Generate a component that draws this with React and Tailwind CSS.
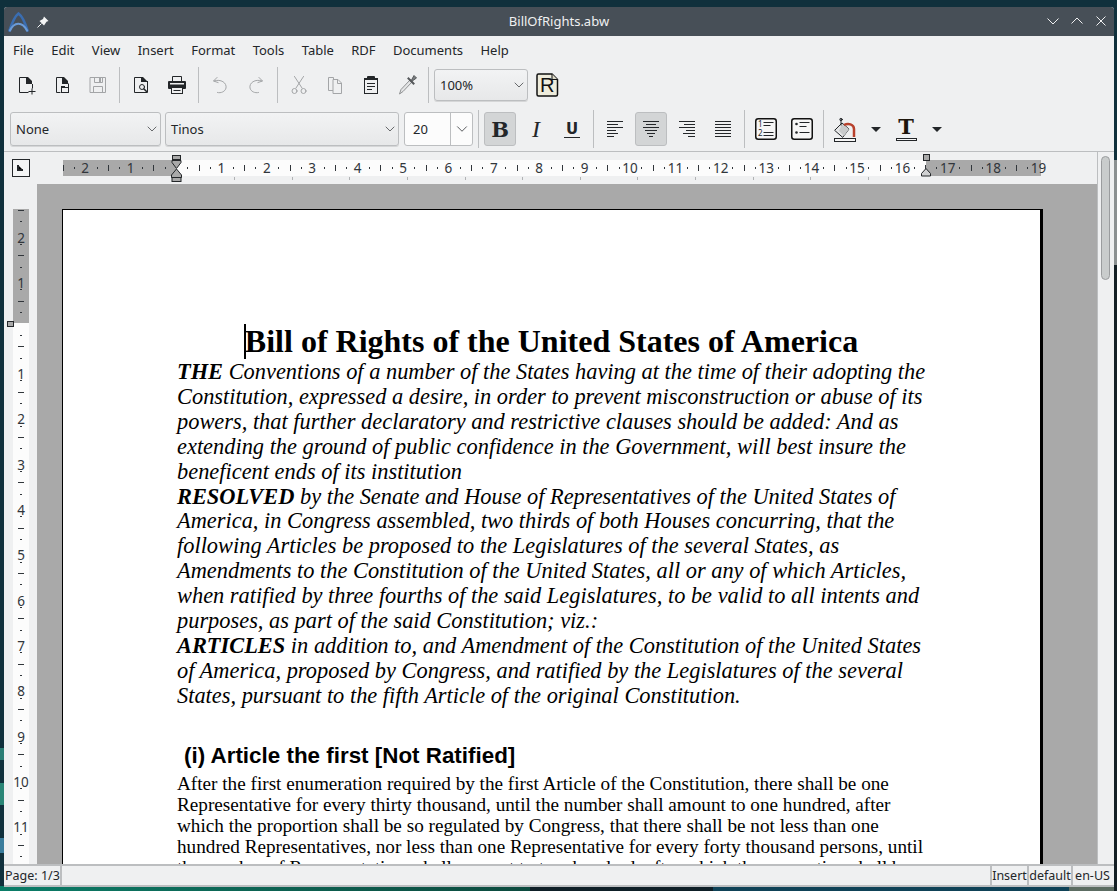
import { ChevronDown } from 'lucide-react'

const menus = ['File', 'Edit', 'View', 'Insert', 'Format', 'Tools', 'Table', 'RDF', 'Documents', 'Help']

const intro = [
  [['THE', true], [' Conventions of a number of the States having at the time of their adopting the']],
  [['Constitution, expressed a desire, in order to prevent misconstruction or abuse of its']],
  [['powers, that further declaratory and restrictive clauses should be added: And as']],
  [['extending the ground of public confidence in the Government, will best insure the']],
  [['beneficent ends of its institution']],
  [['RESOLVED', true], [' by the Senate and House of Representatives of the United States of']],
  [['America, in Congress assembled, two thirds of both Houses concurring, that the']],
  [['following Articles be proposed to the Legislatures of the several States, as']],
  [['Amendments to the Constitution of the United States, all or any of which Articles,']],
  [['when ratified by three fourths of the said Legislatures, to be valid to all intents and']],
  [['purposes, as part of the said Constitution; viz.:']],
  [['ARTICLES', true], [' in addition to, and Amendment of the Constitution of the United States']],
  [['of America, proposed by Congress, and ratified by the Legislatures of the several']],
  [['States, pursuant to the fifth Article of the original Constitution.']],
]

const article = [
  'After the first enumeration required by the first Article of the Constitution, there shall be one',
  'Representative for every thirty thousand, until the number shall amount to one hundred, after',
  'which the proportion shall be so regulated by Congress, that there shall be not less than one',
  'hundred Representatives, nor less than one Representative for every forty thousand persons, until',
  'the number of Representatives shall amount to two hundred; after which the proportion shall be',
]

const DARK = '#232629'
const GREY = '#a3a5a7'

function Sep() {
  return <div className="w-px h-[36px] mx-[3px] bg-[#bcbec0]" />
}

function ToolBtn({ children, active }) {
  return (
    <div className={active
      ? 'w-[32px] h-[34px] mx-[2px] flex items-center justify-center bg-[#d3d5d6] border border-[#bcbec0] rounded-[3px]'
      : 'w-[36px] h-[34px] flex items-center justify-center'}>
      {children}
    </div>
  )
}

function Icon({ children, w = 22, h = 22 }) {
  return <svg width={w} height={h} viewBox={`0 0 ${w} ${h}`} fill="none" strokeLinecap="square">{children}</svg>
}

function Combo({ label, className }) {
  return (
    <div className={`flex items-center justify-between pl-[5px] pr-0 rounded-[3px] border border-[#bcbec0] bg-linear-to-b from-[#f2f3f4] to-[#e7e8e9] shadow-[0_1px_0_#d5d6d7] ${className}`}>
      <span className="pt-[1px]">{label}</span>
      <ChevronDown size={16} strokeWidth={1} color={DARK} />
    </div>
  )
}

function HRuler() {
  const x0 = 176
  const cm = 45.4
  const items = []
  for (let k = -10; k <= 76; k++) {
    const x = x0 + k * (cm / 4)
    if (k % 4 === 0) {
      const n = Math.abs(k / 4)
      if (n !== 0) items.push(<text key={k} x={x} y={173} textAnchor="middle" fontSize="13.5" fill="#31363b">{n}</text>)
    } else if (k % 2 === 0) {
      items.push(<rect key={k} x={Math.round(x)} y={165} width="1" height="6" fill="#31363b" />)
    } else {
      items.push(<rect key={k} x={Math.round(x)} y={167} width="1" height="2" fill="#31363b" />)
    }
  }
  const marks = []
  for (let i = 0; i < 12; i++) {
    marks.push(<rect key={i} x={Math.round(234 + i * 57.64)} y={177} width="1" height="3" fill="#b0b2b4" />)
  }
  return (
    <svg width="1093" height="32" viewBox="4 152 1093 32" className="block shrink-0">
      <rect x="63" y="160" width="113" height="16" fill="#a9a9a9" />
      <rect x="176" y="160" width="750" height="16" fill="#fcfcfc" />
      <rect x="926" y="160" width="115" height="16" fill="#a9a9a9" />
      {items}
      {marks}
      <rect x="12.5" y="159.5" width="17" height="17" fill="#f4f5f5" stroke="#232629" />
      <path d="M18 165v5h5" stroke="#232629" strokeWidth="2" />
      <rect x="172.5" y="155.5" width="8" height="4" fill="#a9a9a9" stroke="#232629" />
      <path d="M172 160.5h9v2l-4.5 6l-4.5-6z" fill="#a9a9a9" stroke="#232629" />
      <path d="M176.5 169l5 6v2.500h-10v-2.500z" fill="#a9a9a9" stroke="#232629" />
      <rect x="172" y="177.500" width="9" height="4" fill="#a9a9a9" stroke="#232629" />
      <rect x="923.500" y="154.500" width="6" height="6" fill="#a9a9a9" stroke="#232629" />
      <path d="M926 168.500l4.500 5v2.500h-9v-2.500z" fill="#cfd0d1" stroke="#232629" />
    </svg>
  )
}

function VRuler() {
  const y0 = 323.5
  const cm = 45.35
  const items = []
  for (let k = -10; k <= 47; k++) {
    const y = y0 + k * (cm / 4)
    if (k % 4 === 0) {
      const n = Math.abs(k / 4)
      if (n !== 0) items.push(<text key={k} x={21} y={y + 10} textAnchor="middle" fontSize="13.5" fill="#31363b">{n}</text>)
    } else if (k % 2 === 0) {
      items.push(<rect key={k} x={18} y={Math.round(y)} width="6" height="1" fill="#31363b" />)
    } else {
      items.push(<rect key={k} x={20} y={Math.round(y)} width="2" height="1" fill="#31363b" />)
    }
  }
  return (
    <svg width="33" height="680" viewBox="4 184 33 680" className="block shrink-0">
      <rect x="13" y="209" width="16" height="114" fill="#a9a9a9" />
      <rect x="13" y="323" width="16" height="541" fill="#fcfcfc" />
      {items}
      <rect x="7.500" y="321.500" width="6" height="5" fill="#a9a9a9" stroke="#232629" />
    </svg>
  )
}

export default function App() {
  return (
    <div className="relative w-[1117px] h-[891px] overflow-hidden bg-[#10303c] pt-[7px] font-['Noto_Sans',sans-serif] text-[13px] text-[#232629]">
      {/* wallpaper showing round the window */}
      <div className="absolute left-0 top-[748px] w-[4px] h-[12px] bg-[#2a7d74]" />
      <div className="absolute left-0 top-[783px] w-[4px] h-[22px] bg-[#2a8576]" />
      <div className="absolute left-0 top-[838px] w-[4px] h-[15px] bg-[#3a7c9c]" />
      <div className="absolute left-0 top-[886px] w-[530px] h-[5px] bg-linear-to-r from-[#0b7d68] to-[#0c4a3e]" />
      <div className="absolute left-[530px] top-[886px] w-[183px] h-[5px] bg-[#0e1f27]" />
      <div className="absolute left-[713px] top-[886px] w-[356px] h-[5px] bg-[#0f4257]" />
      <div className="absolute left-[1069px] top-[886px] w-[48px] h-[5px] bg-[#5c6c62]" />
      <div className="absolute right-0 top-[160px] w-[3px] h-[105px] bg-[#8b9091]" />
      <div className="absolute right-0 top-[265px] w-[3px] h-[630px] bg-[#141f25]" />

      <div className="relative ml-[4px] w-[1110px] h-[880px] flex flex-col bg-[#eff0f1] rounded-t-[3px] overflow-hidden">
        {/* title bar */}
        <div className="relative h-[29px] shrink-0 bg-[#474f57] flex items-center justify-center text-[#eff0f1]">
          <div className="absolute left-[4px] top-[5px] flex items-center gap-[8px]">
            <svg width="21" height="20" viewBox="0 0 21 20" fill="none">
              <path d="M1.500 18.500C4 11 7 4 10.500 1.500C14 4 17.500 12 19.500 18.500" stroke="#3a6db0" strokeWidth="2.600" strokeLinecap="round" />
              <path d="M2 18.500C6 10 14 9 19 18.500" stroke="#6a9bd8" strokeWidth="2.200" strokeLinecap="round" />
            </svg>
            <svg width="12" height="12" viewBox="0 0 12 12">
              <path d="M7 0.500L11.500 5L9.500 5.800L7 9.500L4 6.500L2.500 5L6 3z" fill="#f4f5f5" />
              <path d="M4.500 7.500L0.500 11.500" stroke="#f4f5f5" />
            </svg>
          </div>
          <span>BillOfRights.abw</span>
          <div className="absolute right-[6px] top-[6px] flex items-center gap-[10px]">
            <svg width="14" height="16" viewBox="0 0 14 16" fill="none" stroke="#eff0f1"><path d="M1.500 5.500l5.500 5.500l5.500-5.500" /></svg>
            <svg width="14" height="16" viewBox="0 0 14 16" fill="none" stroke="#eff0f1"><path d="M1.500 10.500l5.500-5.500l5.500 5.500" /></svg>
            <svg width="14" height="16" viewBox="0 0 14 16" fill="none" stroke="#eff0f1"><path d="M2.500 3.500l9 9M11.500 3.500l-9 9" /></svg>
          </div>
        </div>

        {/* menu bar */}
        <div className="h-[28px] shrink-0 flex items-center pl-[9px] pt-[1px]">
          {menus.map((m) => (
            <span key={m} className="mr-[17.400px]">{m}</span>
          ))}
        </div>

        {/* main toolbar */}
        <div className="h-[42px] shrink-0 flex items-center pl-[4px]">
          <ToolBtn>
            <Icon>
              <path d="M11.500 3.500H4.500V18.500H13" stroke={DARK} />
              <path d="M11 3h2l4 4v3h-6z" fill={DARK} />
              <path d="M17.500 10.500V14M14 17.500h6M17 15v5" stroke={DARK} />
            </Icon>
          </ToolBtn>
          <ToolBtn>
            <Icon>
              <path d="M11.500 3.500H5.500V18.500H9" stroke={DARK} />
              <path d="M11 3h2l4 4v3h-6z" fill={DARK} />
              <rect x="10.500" y="13.500" width="7" height="5" stroke={DARK} />
              <rect x="10" y="12" width="4" height="2" fill={DARK} />
              <path d="M17.500 10v3" stroke={DARK} />
            </Icon>
          </ToolBtn>
          <ToolBtn>
            <Icon>
              <path d="M3.500 3.500H18.500V18.500H3.500z" stroke={GREY} />
              <path d="M7.500 3.500V8.500H15.500V3.500M6.500 18.500V12.500H15.500V18.500" stroke={GREY} />
              <rect x="12" y="4" width="2" height="4" fill={GREY} />
            </Icon>
          </ToolBtn>
          <Sep />
          <ToolBtn>
            <Icon>
              <path d="M11.500 3.500H4.500V18.500H17.500V7.500" stroke={DARK} />
              <path d="M11 3h2l4 4v1h-6z" fill={DARK} />
              <circle cx="12" cy="13" r="2.500" stroke={DARK} />
              <path d="M14 15l2.500 2.500" stroke={DARK} strokeWidth="1.500" />
            </Icon>
          </ToolBtn>
          <ToolBtn>
            <Icon>
              <path d="M6.500 7V2.500H15.500V7" stroke={DARK} />
              <rect x="2" y="7" width="18" height="8" rx="1" fill={DARK} />
              <rect x="4" y="9" width="14" height="1.500" fill="#eff0f1" />
              <rect x="5.500" y="13.500" width="11" height="6" fill="#eff0f1" stroke={DARK} />
              <path d="M8 16.500h6" stroke={DARK} />
            </Icon>
          </ToolBtn>
          <Sep />
          <ToolBtn>
            <Icon>
              <path d="M8 3.500L4.500 7L9 8.500" stroke={GREY} />
              <path d="M5 7C12 4.500 18 9 17 14C16.200 17.500 12 19.500 8.500 18.500" stroke={GREY} strokeLinecap="round" />
            </Icon>
          </ToolBtn>
          <ToolBtn>
            <Icon>
              <path d="M14 3.500L17.500 7L13 8.500" stroke={GREY} />
              <path d="M17 7C10 4.500 4 9 5 14C5.800 17.500 10 19.500 13.500 18.500" stroke={GREY} strokeLinecap="round" />
            </Icon>
          </ToolBtn>
          <Sep />
          <div className="flex">
            <ToolBtn>
              <Icon>
                <path d="M6.500 2.500L14 14M15.500 2.500L8 14" stroke={GREY} />
                <circle cx="6.500" cy="17" r="2.500" stroke={GREY} />
                <circle cx="15.500" cy="17" r="2.500" stroke={GREY} />
              </Icon>
            </ToolBtn>
            <ToolBtn>
              <Icon>
                <path d="M9.500 5.500V3.500H4.500V16.500H8.500" stroke={GREY} />
                <path d="M9.500 5.500H14L17.500 9V19.500H9.500z" stroke={GREY} />
                <path d="M13.500 6v3.500H17" stroke={GREY} />
              </Icon>
            </ToolBtn>
            <ToolBtn>
              <Icon>
                <rect x="4.500" y="4.500" width="13" height="15" stroke={DARK} />
                <rect x="7" y="2" width="8" height="4" rx="1" fill={DARK} />
                <rect x="4" y="4" width="14" height="2" fill={DARK} />
                <path d="M7.500 9.500h7M7.500 12.500h7M7.500 15.500h4" stroke={DARK} />
              </Icon>
            </ToolBtn>
            <ToolBtn>
              <Icon>
                <path d="M14 6L5 15.500L3.500 20L7 17.500L16 8z" fill="#e4e5e6" stroke="#8f9193" strokeLinejoin="round" />
                <path d="M12.500 4.500L17.500 9.500" stroke="#55585b" strokeWidth="2" />
                <path d="M15 7L18 1.500L20.500 4L15.500 7.500" fill="#7c7f82" stroke="#55585b" />
              </Icon>
            </ToolBtn>
          </div>
          <Sep />
          <Combo label="100%" className="w-[94px] h-[32px] ml-[2px]" />
          <svg width="23" height="24" viewBox="0 0 23 24" className="ml-[8px]">
            <path d="M2.500 1H16L21.500 6.500V21.500Q21.500 23 20 23H2.500Q1 23 1 21.500V2.500Q1 1 2.500 1z" fill="#eeecdc" stroke="#111" strokeWidth="1.500" />
            <path d="M16 1V6.500H21.500" fill="#dcdac8" stroke="#111" />
            <text x="4" y="19" fontSize="20" fill="#111" className="font-['Liberation_Sans',sans-serif]">R</text>
          </svg>
        </div>

        {/* format toolbar */}
        <div className="h-[45px] shrink-0 flex items-center pl-[6px] gap-[4px] pt-[1px]">
          <Combo label="None" className="w-[151px] h-[34px]" />
          <Combo label="Tinos" className="w-[234px] h-[34px]" />
          <div className="ml-[1px] flex h-[34px] w-[69px] rounded-[3px] border border-[#bcbec0] bg-[#fcfcfc]">
            <span className="w-[45px] pl-[8px] leading-[33px]">20</span>
            <div className="flex-1 border-l border-[#bcbec0] flex items-center justify-center">
              <ChevronDown size={18} strokeWidth={1} color={DARK} />
            </div>
          </div>
          <div className="flex items-center -ml-[3px]">
            <div className="w-px h-[38px] mx-[4px] bg-[#bcbec0]" />
            <div className="w-[32px] h-[34px] ml-[1px] mr-[2px] rounded-[3px] border border-[#bcbec0] bg-[#d3d5d6] flex items-center justify-center font-['DejaVu_Serif',serif] font-bold text-[21px] leading-none">B</div>
            <ToolBtn>
              <span className="font-['Liberation_Serif',serif] italic text-[24px] leading-none">I</span>
            </ToolBtn>
            <ToolBtn>
              <span className="font-['DejaVu_Sans',sans-serif] font-bold text-[15px] leading-[16px] border-b-[1.500px] border-[#232629] px-[2px]">U</span>
            </ToolBtn>
            <div className="w-px h-[38px] mx-[3px] bg-[#bcbec0]" />
            <ToolBtn>
              <Icon>
                <path d="M3.500 3.500h15M3.500 6.500h10M3.500 9.500h15M3.500 12.500h8M3.500 15.500h10M3.500 18.500h6" stroke={DARK} />
              </Icon>
            </ToolBtn>
            <ToolBtn active>
              <Icon>
                <path d="M3.500 3.500h15M6.500 6.500h9M3.500 9.500h15M5.500 12.500h11M7.500 15.500h7M9.500 18.500h3" stroke={DARK} />
              </Icon>
            </ToolBtn>
            <ToolBtn>
              <Icon>
                <path d="M3.500 3.500h15M8.500 6.500h10M3.500 9.500h15M10.500 12.500h8M7.500 15.500h11M12.500 18.500h6" stroke={DARK} />
              </Icon>
            </ToolBtn>
            <ToolBtn>
              <Icon>
                <path d="M3.500 3.500h15M3.500 6.500h15M3.500 9.500h15M3.500 12.500h15M3.500 15.500h15M3.500 18.500h15" stroke={DARK} />
              </Icon>
            </ToolBtn>
            <div className="w-px h-[38px] mx-[3px] bg-[#bcbec0]" />
            <ToolBtn>
              <Icon>
                <rect x="0.750" y="0.750" width="20.500" height="20.500" rx="2.500" fill="#f6f6f6" stroke="#111" strokeWidth="1.500" />
                <text x="3" y="9" fontSize="8" fill="#232629">1</text>
                <text x="3" y="18" fontSize="8" fill="#232629">2</text>
                <path d="M9 4.500h9M9 7.500h6M9 14.500h9M9 17.500h9" stroke="#232629" />
              </Icon>
            </ToolBtn>
            <ToolBtn>
              <Icon>
                <rect x="0.750" y="0.750" width="20.500" height="20.500" rx="2.500" fill="#f6f6f6" stroke="#111" strokeWidth="1.500" />
                <circle cx="5.500" cy="6" r="1.300" fill="#232629" />
                <circle cx="5.500" cy="14.500" r="1.300" fill="#232629" />
                <path d="M9 4.500h9M9 8.500h6M9 14.500h9" stroke="#232629" />
              </Icon>
            </ToolBtn>
            <div className="w-px h-[38px] mx-[3px] bg-[#bcbec0]" />
            <ToolBtn>
              <Icon w={24} h={25}>
                <path d="M2 13L9 6L16 12L10 20z" fill="#e6e7e8" stroke="#232629" />
                <path d="M6 14L9 7L16 12L11 19z" fill="#c9cbcc" />
                <path d="M8 8V2.500" stroke="#232629" />
                <circle cx="8" cy="2.500" r="1.200" stroke="#232629" />
                <path d="M11 8C15 6 21 7 21 12V20" stroke="#b8412c" strokeWidth="2.500" strokeLinecap="butt" />
                <rect x="1.500" y="21.500" width="21" height="3" fill="#f6f6f6" stroke="#232629" />
              </Icon>
            </ToolBtn>
            <div className="w-[27px] flex items-center justify-center -ml-[1px]">
              <div className="w-0 h-0 border-x-[5px] border-x-transparent border-t-[5px] border-t-[#232629]" />
            </div>
            <div className="w-[24px] h-[24px] ml-[5px] flex flex-col items-center">
              <span className="font-['DejaVu_Serif',serif] font-bold text-[21px] leading-[20px] text-[#1d150b]">T</span>
              <div className="w-[21px] h-[3px] mt-[1px] border border-[#232629] bg-[#f6f6f6]" />
            </div>
            <div className="w-[38px] flex items-center justify-center">
              <div className="w-0 h-0 border-x-[5px] border-x-transparent border-t-[5px] border-t-[#232629]" />
            </div>
          </div>
        </div>

        <div className="h-px shrink-0 bg-[#bcbec0]" />

        {/* document area with rulers and scrollbar */}
        <div className="h-[712px] shrink-0 flex">
          <div className="w-[1093px] flex flex-col">
            <HRuler />
            <div className="flex h-[680px]">
              <VRuler />
              <div className="flex-1 bg-[#a9a9a9] pt-[25px] pl-[25px] overflow-hidden">
                <div className="w-[981px] h-[700px] bg-white border-t border-l border-black border-r-[3px] pl-[114px] pt-[113px] text-black font-['Liberation_Serif',serif] whitespace-nowrap">
                  <div className="relative w-[749px] text-center font-bold text-[32px] leading-[37px]">
                    <span className="relative">
                      <span className="absolute -left-[1px] top-[1px] w-[2px] h-[35px] bg-black" />
                      Bill of Rights of the United States of America
                    </span>
                  </div>
                  <div className="text-[22.400px] leading-[24.900px] italic">
                    {intro.map((line, i) => (
                      <div key={i}>
                        {line.map(([t, bold], j) => (
                          <span key={j} className={bold ? 'font-bold' : ''}>{t}</span>
                        ))}
                      </div>
                    ))}
                  </div>
                  <div className="mt-[34px] ml-[7px] font-['Liberation_Sans',sans-serif] font-bold text-[22.400px] leading-[25px]">
                    (i) Article the first [Not Ratified]
                  </div>
                  <div className="mt-[5px] text-[19.200px] leading-[21px]">
                    {article.map((l) => (
                      <div key={l}>{l}</div>
                    ))}
                  </div>
                </div>
              </div>
            </div>
          </div>
          <div className="flex-1 border-l border-[#bcbec0] pt-[4px] pl-[3px]">
            <div className="w-[9px] h-[124px] rounded-full border border-[#9a9c9e] bg-[#c9cccc]" />
          </div>
        </div>

        {/* status bar */}
        <div className="h-[23px] shrink-0 flex flex-col">
          <div className="h-[2px] bg-[#bcbec0]" />
          <div className="flex h-[19px] items-center text-[12.500px] leading-[19px] whitespace-nowrap">
            <div className="w-[56px] pl-[1px]">Page: 1/3</div>
            <div className="w-[2px] h-full bg-[#bcbec0]" />
            <div className="w-[928px]" />
            <div className="w-[2px] h-full bg-[#bcbec0]" />
            <div className="w-[35px] text-center">Insert</div>
            <div className="w-[2px] h-full bg-[#bcbec0]" />
            <div className="w-[42px] text-center">default</div>
            <div className="w-[2px] h-full bg-[#bcbec0]" />
            <div className="w-[39px] text-center">en-US</div>
          </div>
          <div className="h-[2px] bg-[#bcbec0]" />
        </div>
      </div>
    </div>
  )
}
